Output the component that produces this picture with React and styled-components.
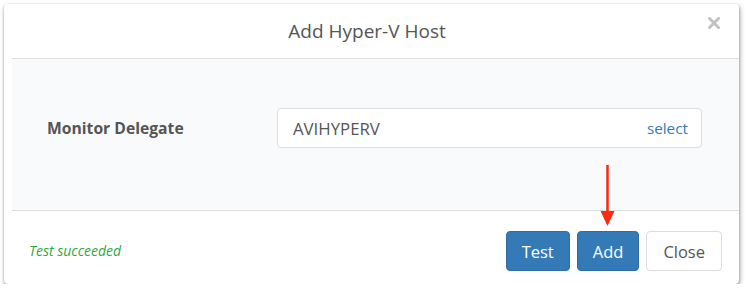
import React from "react";
import styled, { createGlobalStyle } from "styled-components";

const Global = createGlobalStyle`
  html, body { margin: 0; padding: 0; background: #ffffff; }
  body { font-family: "Open Sans", "Liberation Sans", sans-serif; }
  * { box-sizing: border-box; }
`;

const Page = styled.div`
  padding: 4px 0 0 4px;
`;

const Dialog = styled.div`
  position: relative;
  width: 735px;
  height: 280px;
  background: #ffffff;
  border-radius: 4px;
  box-shadow: 0 1px 2px rgba(0, 0, 0, 0.25), 1px 2px 5px rgba(0, 0, 0, 0.35);
  display: flex;
  flex-direction: column;
`;

const Header = styled.div`
  height: 54px;
  display: grid;
  grid-template-columns: 1fr auto 1fr;
  align-items: center;
  padding: 0 19px 0 10px;
`;

const Title = styled.h4`
  grid-column: 2;
  margin: 0;
  font-size: 19px;
  font-weight: 400;
  color: #555555;
`;

const CloseX = styled.button`
  grid-column: 3;
  justify-self: end;
  align-self: start;
  margin-top: 13px;
  border: 0;
  padding: 0;
  background: transparent;
  width: 12px;
  height: 12px;
  display: flex;
  cursor: pointer;
`;

const Body = styled.div`
  margin-left: 8px;
  border-top: 1px solid #dddddd;
  border-bottom: 1px solid #dddddd;
  background: #f9fafb;
  height: 153px;
  padding: 49px 37px 0 35px;
  display: grid;
  grid-template-columns: 230px 1fr;
  align-items: start;
`;

const Label = styled.label`
  font-size: 15.7px;
  font-weight: 700;
  color: #555555;
  line-height: 40px;
`;

const InputBox = styled.div`
  height: 40px;
  background: #ffffff;
  border: 1px solid #dddddd;
  border-radius: 4px;
  display: flex;
  align-items: center;
  justify-content: space-between;
  padding: 0 13px 0 15px;
`;

const InputValue = styled.span`
  font-size: 16.8px;
  color: #555555;
`;

const SelectLink = styled.a`
  font-size: 15.3px;
  color: #337ab7;
  text-decoration: none;
  cursor: pointer;
`;

const Footer = styled.div`
  margin-left: 8px;
  flex: 1;
  display: flex;
  align-items: flex-start;
  justify-content: space-between;
  padding: 20px 17px 0 17px;
`;

const Status = styled.span`
  font-size: 14px;
  font-style: italic;
  color: #2ea83f;
  line-height: 40px;
`;

const Buttons = styled.div`
  display: flex;
  gap: 7px;
`;

const Button = styled.button`
  height: 40px;
  padding: 0 ${(p) => (p.$default ? "16px" : "15px")};
  font-family: "Open Sans", "Liberation Sans", sans-serif;
  font-size: 16.5px;
  border-radius: 4px;
  border: 1px solid ${(p) => (p.$default ? "#dddddd" : "#2e6da4")};
  background: ${(p) => (p.$default ? "#ffffff" : "#337ab7")};
  color: ${(p) => (p.$default ? "#555555" : "#ffffff")};
  cursor: pointer;
`;

const Arrow = styled.svg`
  position: absolute;
  left: 596px;
  top: 161px;
`;

export default function App() {
  return (
    <>
      <Global />
      <Page>
        <Dialog>
          <Header>
            <Title>Add Hyper-V Host</Title>
            <CloseX aria-label="Close">
              <svg width="12" height="12" viewBox="0 0 12 12">
                <path
                  d="M1.5 1.5 L10.5 10.5 M10.5 1.5 L1.5 10.5"
                  stroke="#c2c2c2"
                  strokeWidth="3"
                  strokeLinecap="square"
                />
              </svg>
            </CloseX>
          </Header>
          <Body>
            <Label>Monitor Delegate</Label>
            <InputBox>
              <InputValue>AVIHYPERV</InputValue>
              <SelectLink>select</SelectLink>
            </InputBox>
          </Body>
          <Footer>
            <Status>Test succeeded</Status>
            <Buttons>
              <Button>Test</Button>
              <Button>Add</Button>
              <Button $default>Close</Button>
            </Buttons>
          </Footer>
          <Arrow width="15" height="61" viewBox="0 0 15 61">
            <line x1="7.5" y1="0" x2="7.5" y2="48" stroke="#fa2a10" strokeWidth="2.5" />
            <polygon points="0.5,46 14.5,46 7.5,61" fill="#fa2a10" />
          </Arrow>
        </Dialog>
      </Page>
    </>
  );
}
